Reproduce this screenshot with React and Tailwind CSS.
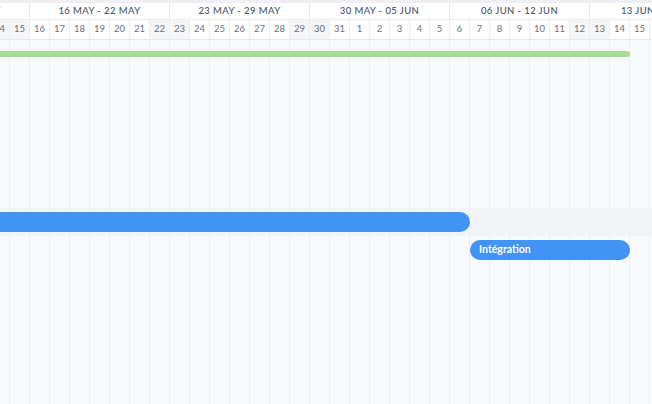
import React from "react";

const weeks = [
  { label: "09 MAY - 15 MAY", days: [9, 10, 11, 12, 13, 14, 15] },
  { label: "16 MAY - 22 MAY", days: [16, 17, 18, 19, 20, 21, 22] },
  { label: "23 MAY - 29 MAY", days: [23, 24, 25, 26, 27, 28, 29] },
  { label: "30 MAY - 05 JUN", days: [30, 31, 1, 2, 3, 4, 5] },
  { label: "06 JUN - 12 JUN", days: [6, 7, 8, 9, 10, 11, 12] },
  { label: "13 JUN - 19 JUN", days: [13, 14, 15, 16, 17, 18, 19] },
];

// shaded header cells (index in allDays)
const shaded = [5, 6, 13, 14, 20, 21, 34, 35];

const allDays = weeks.flatMap((w) => w.days);

export default function App() {
  return (
    <div
      className="w-[652px] h-[404px] overflow-hidden bg-[#f9fafc]"
      style={{ fontFamily: "Lato, 'Open Sans', sans-serif" }}
    >
      <div className="ml-[-110px] w-[840px] h-full flex flex-col">
        {/* header */}
        <div className="bg-white border-t-[3px] border-[#eef0f3]">
          <div className="flex h-[17px] border-b border-[#eceef1]">
            {weeks.map((w) => (
              <div
                key={w.label}
                className="w-[140px] shrink-0 border-r border-[#e6e8ec] flex items-center justify-center text-[9.5px] font-medium tracking-[0.4px] text-[#4b5563]"
              >
                {w.label}
              </div>
            ))}
          </div>
          <div className="flex h-[20px] border-b border-[#e6e8ec]">
            {allDays.map((d, i) => (
              <div
                key={i}
                className={
                  "w-[20px] shrink-0 border-r border-[#eceef1] flex items-center justify-center text-[9.5px] text-[#6b7280] " +
                  (shaded.includes(i) ? "bg-[#f5f6f8]" : "")
                }
              >
                {d}
              </div>
            ))}
          </div>
        </div>

        {/* body */}
        <div className="relative flex-1">
          <div className="absolute inset-0 flex">
            {allDays.map((d, i) => (
              <div key={i} className="w-[20px] shrink-0 border-r border-[#eceef1]" />
            ))}
          </div>
          <div className="relative flex flex-col">
            <div className="mt-[11px] h-[6px] w-[740px] rounded-r-full bg-[#a6dc93]" />
            <div className="mt-[151px] h-[28px] bg-[#f1f3f6]/80 flex items-center">
              <div className="h-[20px] w-[580px] rounded-r-full bg-[#4193f4]" />
            </div>
            <div className="mt-[4px] ml-[580px] h-[20px] w-[160px] rounded-full bg-[#4193f4] flex items-center px-[9px] text-[10.5px] font-bold text-white">
              Intégration
            </div>
          </div>
        </div>
      </div>
    </div>
  );
}
